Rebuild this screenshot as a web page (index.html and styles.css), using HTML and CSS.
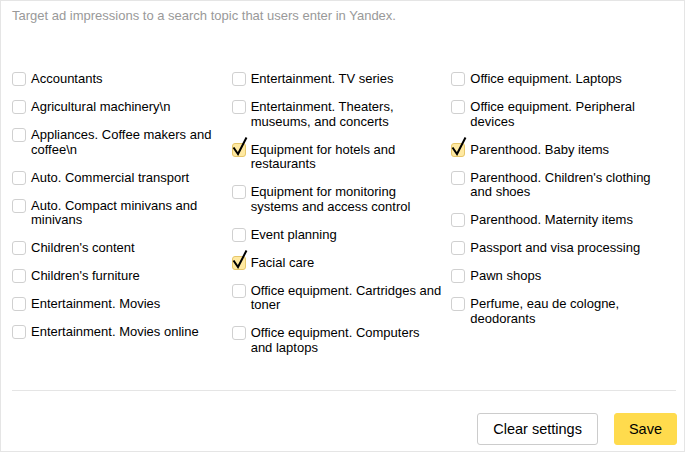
FILE: index.html
```html
<!DOCTYPE html>
<html>
<head>
<meta charset="utf-8">
<link rel="stylesheet" href="styles.css">
</head>
<body>
<div class="panel">
  <p class="desc">Target ad impressions to a search topic that users enter in Yandex.</p>
  <div class="grid">
    <div class="col">
      <label class="item"><span class="box"></span><span class="txt">Accountants</span></label>
      <label class="item"><span class="box"></span><span class="txt">Agricultural machinery\n</span></label>
      <label class="item"><span class="box"></span><span class="txt">Appliances. Coffee makers and coffee\n</span></label>
      <label class="item"><span class="box"></span><span class="txt">Auto. Commercial transport</span></label>
      <label class="item"><span class="box"></span><span class="txt">Auto. Compact minivans and minivans</span></label>
      <label class="item"><span class="box"></span><span class="txt">Children's content</span></label>
      <label class="item"><span class="box"></span><span class="txt">Children's furniture</span></label>
      <label class="item"><span class="box"></span><span class="txt">Entertainment. Movies</span></label>
      <label class="item"><span class="box"></span><span class="txt">Entertainment. Movies online</span></label>
    </div>
    <div class="col">
      <label class="item"><span class="box"></span><span class="txt">Entertainment. TV series</span></label>
      <label class="item"><span class="box"></span><span class="txt">Entertainment. Theaters, museums, and concerts</span></label>
      <label class="item"><span class="box checked"><svg class="tick" viewBox="0 0 14 14" width="14" height="14"><path d="M1.5 4.5 L6 11 L14.5 -5.5"/></svg></span><span class="txt">Equipment for hotels and restaurants</span></label>
      <label class="item"><span class="box"></span><span class="txt">Equipment for monitoring systems and access control</span></label>
      <label class="item"><span class="box"></span><span class="txt">Event planning</span></label>
      <label class="item"><span class="box checked"><svg class="tick" viewBox="0 0 14 14" width="14" height="14"><path d="M1.5 4.5 L6 11 L14.5 -5.5"/></svg></span><span class="txt">Facial care</span></label>
      <label class="item"><span class="box"></span><span class="txt">Office equipment. Cartridges and toner</span></label>
      <label class="item"><span class="box"></span><span class="txt">Office equipment. Computers and laptops</span></label>
    </div>
    <div class="col">
      <label class="item"><span class="box"></span><span class="txt">Office equipment. Laptops</span></label>
      <label class="item"><span class="box"></span><span class="txt">Office equipment. Peripheral devices</span></label>
      <label class="item"><span class="box checked"><svg class="tick" viewBox="0 0 14 14" width="14" height="14"><path d="M1.5 4.5 L6 11 L14.5 -5.5"/></svg></span><span class="txt">Parenthood. Baby items</span></label>
      <label class="item"><span class="box"></span><span class="txt">Parenthood. Children's clothing and shoes</span></label>
      <label class="item"><span class="box"></span><span class="txt">Parenthood. Maternity items</span></label>
      <label class="item"><span class="box"></span><span class="txt">Passport and visa processing</span></label>
      <label class="item"><span class="box"></span><span class="txt">Pawn shops</span></label>
      <label class="item"><span class="box"></span><span class="txt">Perfume, eau de cologne, deodorants</span></label>
    </div>
  </div>
  <div class="divider"></div>
  <div class="actions">
    <button class="btn btn-clear">Clear settings</button>
    <button class="btn btn-save">Save</button>
  </div>
</div>
</body>
</html>
```
FILE: styles.css
```css
* { box-sizing: border-box; }
html, body { margin: 0; padding: 0; background: #fff; }
body {
  font-family: "Liberation Sans", Arial, sans-serif;
  font-size: 13px;
  color: #000;
}
.panel {
  width: 685px;
  height: 452px;
  border: 1px solid #e5e5e5;
  padding: 7px 13px 0 11px;
  display: flex;
  flex-direction: column;
}
.desc {
  margin: 0;
  color: #999;
  line-height: 15px;
}
.grid {
  margin-top: 49px;
  display: grid;
  grid-template-columns: repeat(3, 1fr);
}
.col {
  display: flex;
  flex-direction: column;
  gap: 13.5px;
}
.item {
  display: flex;
  align-items: flex-start;
  line-height: 14.5px;
}
.box {
  position: relative;
  flex: none;
  width: 14px;
  height: 14px;
  margin-top: 0;
  margin-right: 5px;
  border: 1px solid #d0d0d0;
  border-radius: 3px;
  background: #fff;
}
.box.checked {
  background: #ffe9a1;
  border-color: #e6c66a;
}
.tick {
  position: absolute;
  left: -1px;
  top: -1px;
  overflow: visible;
}
.tick path {
  fill: none;
  stroke: #000;
  stroke-width: 2;
  stroke-linejoin: miter;
}
.txt {
  max-width: 193px;
}
.divider {
  margin-top: auto;
  margin-bottom: 22px;
  border-top: 1px solid #e5e5e5;
  margin-right: -5px;
}
.actions {
  display: flex;
  justify-content: flex-end;
  gap: 16px;
  margin-right: -6px;
  margin-bottom: 6px;
}
.btn {
  height: 32px;
  font-family: "Liberation Sans", Arial, sans-serif;
  font-size: 14.5px;
  color: #000;
  border-radius: 3px;
  padding: 0 14px;
  cursor: pointer;
}
.btn-clear {
  background: #fff;
  border: 1px solid #ccc;
  padding: 0 15px;
}
.btn-save {
  background: #ffdb4d;
  border: 1px solid #ffdb4d;
}
```
